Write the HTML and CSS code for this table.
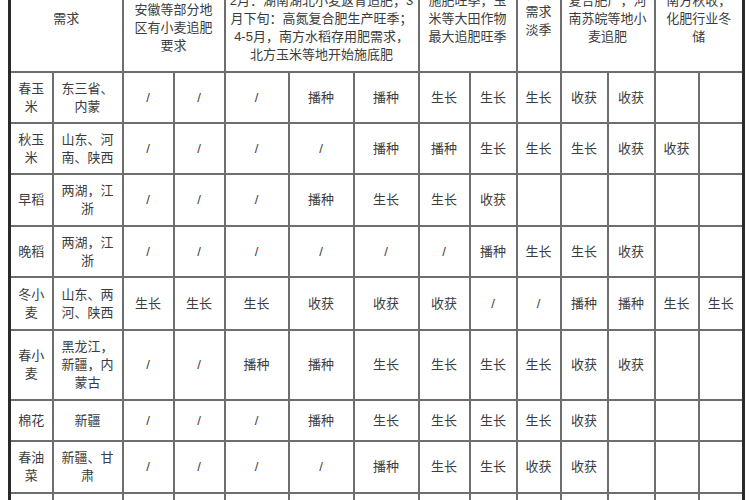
FILE: index.html
```html
<!DOCTYPE html>
<html lang="zh">
<head>
<meta charset="utf-8">
<link rel="stylesheet" href="styles.css">
</head>
<body>
<table class="sheet">
  <colgroup>
    <col class="w-crop"><col class="w-region">
    <col class="w51"><col class="w51">
    <col class="w64"><col class="w65"><col class="w65">
    <col class="w51"><col class="w47">
    <col class="w44">
    <col class="w47"><col class="w47">
    <col class="w44"><col class="w45">
  </colgroup>
  <thead>
    <tr class="r-head">
      <th colspan="2">需求</th>
      <th colspan="2">1-2月：江苏、<br>安徽等部分地<br>区有小麦追肥<br>要求</th>
      <th colspan="3">1月：春节前后化肥市场较淡；<br>2月：湖南湖北小麦返青追肥；3<br>月下旬：高氮复合肥生产旺季；<br>4-5月，南方水稻存用肥需求，<br>北方玉米等地开始施底肥</th>
      <th colspan="2">施肥旺季，玉<br>米等大田作物<br>最大追肥旺季</th>
      <th class="hd-up">7月<br>化肥<br>需求<br>淡季</th>
      <th colspan="2">复合肥产，河<br>南苏皖等地小<br>麦追肥</th>
      <th colspan="2">南方秋收，<br>化肥行业冬<br>储</th>
    </tr>
  </thead>
  <tbody>
    <tr class="r51">
      <td>春玉米</td><td>东三省、<br>内蒙</td>
      <td>/</td><td>/</td><td>/</td><td>播种</td><td>播种</td>
      <td>生长</td><td>生长</td><td>生长</td><td>收获</td><td>收获</td><td></td><td></td>
    </tr>
    <tr class="r51 strong">
      <td>秋玉米</td><td>山东、河<br>南、陕西</td>
      <td>/</td><td>/</td><td>/</td><td>/</td><td>播种</td>
      <td>播种</td><td>生长</td><td>生长</td><td>生长</td><td>收获</td><td>收获</td><td></td>
    </tr>
    <tr class="r52">
      <td>早稻</td><td>两湖，江<br>浙</td>
      <td>/</td><td>/</td><td>/</td><td>播种</td><td>生长</td>
      <td>生长</td><td>收获</td><td></td><td></td><td></td><td></td><td></td>
    </tr>
    <tr class="r51">
      <td>晚稻</td><td>两湖，江<br>浙</td>
      <td>/</td><td>/</td><td>/</td><td>/</td><td>/</td>
      <td>/</td><td>播种</td><td>生长</td><td>生长</td><td>收获</td><td></td><td></td>
    </tr>
    <tr class="r53">
      <td>冬小麦</td><td>山东、两<br>河、陕西</td>
      <td>生长</td><td>生长</td><td>生长</td><td>收获</td><td>收获</td>
      <td>收获</td><td>/</td><td>/</td><td>播种</td><td>播种</td><td>生长</td><td>生长</td>
    </tr>
    <tr class="r70">
      <td>春小麦</td><td>黑龙江，<br>新疆，内<br>蒙古</td>
      <td>/</td><td>/</td><td>播种</td><td>播种</td><td>生长</td>
      <td>生长</td><td>生长</td><td>生长</td><td>收获</td><td>收获</td><td></td><td></td>
    </tr>
    <tr class="r41">
      <td>棉花</td><td>新疆</td>
      <td>/</td><td>/</td><td>/</td><td>播种</td><td>生长</td>
      <td>生长</td><td>生长</td><td>生长</td><td>收获</td><td></td><td></td><td></td>
    </tr>
    <tr class="r52">
      <td>春油菜</td><td>新疆、甘<br>肃</td>
      <td>/</td><td>/</td><td>/</td><td>/</td><td>播种</td>
      <td>生长</td><td>生长</td><td>收获</td><td>收获</td><td></td><td></td><td></td>
    </tr>
    <tr class="r52">
      <td>冬油菜</td><td>长江流<br>域</td>
      <td>生长</td><td>生长</td><td>生长</td><td>收获</td><td>收获</td>
      <td>/</td><td>/</td><td>/</td><td>播种</td><td>生长</td><td>生长</td><td>生长</td>
    </tr>
  </tbody>
</table>
</body>
</html>
```
FILE: styles.css
```css
html, body {
  margin: 0;
  padding: 0;
  background: #ffffff;
  overflow: hidden;
}

.sheet {
  margin: -35px 0 0 8px;
  width: 734px;
  table-layout: fixed;
  border-collapse: collapse;
  border-left: 3px solid #2a2a2a;
  border-right: 3px solid #2a2a2a;
  font-family: "Liberation Sans", "Noto Sans CJK SC", sans-serif;
  font-size: 13px;
  line-height: 18px;
  color: #3c3c3c;
}

.w-crop { width: 43px; }
.w-region { width: 70px; }
.w51 { width: 51px; }
.w64 { width: 64px; }
.w65 { width: 65px; }
.w47 { width: 47px; }
.w44 { width: 44px; }
.w45 { width: 45px; }

.sheet th,
.sheet td {
  border: 2px solid #6e6e6e;
  padding: 0 2px;
  text-align: center;
  vertical-align: middle;
  font-weight: normal;
  overflow: hidden;
}

.sheet th:first-child,
.sheet td:first-child {
  border-left: 3px solid #2a2a2a;
}

.sheet th:last-child,
.sheet td:last-child {
  border-right: 3px solid #2a2a2a;
}

.r-head { height: 103px; }
.r-head th.hd-up { padding-bottom: 32px; }

.r41 { height: 41px; }
.r51 { height: 51px; }
.r52 { height: 52px; }
.r53 { height: 53px; }
.r70 { height: 70px; }

.strong td { border-top: 2px solid #111111; }
```
